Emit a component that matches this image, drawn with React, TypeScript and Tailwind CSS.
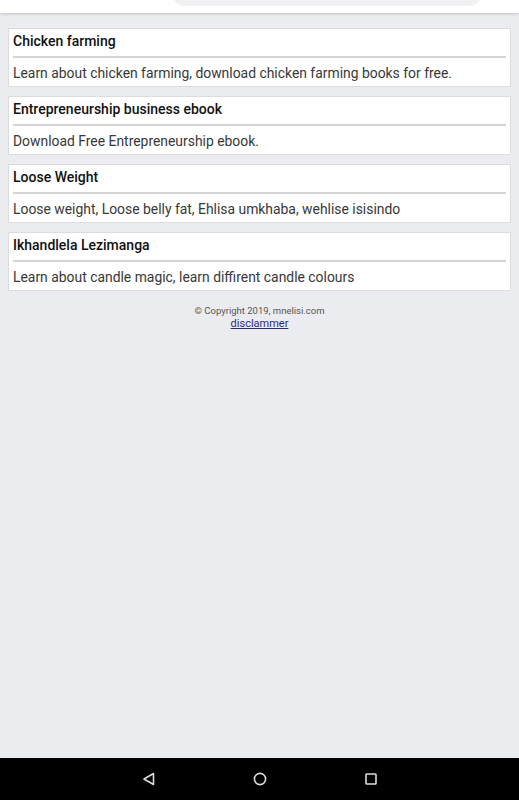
import React from "react";

const items = [
  { t: "Chicken farming", d: "Learn about chicken farming, download chicken farming books for free." },
  { t: "Entrepreneurship business ebook", d: "Download Free Entrepreneurship ebook." },
  { t: "Loose Weight", d: "Loose weight, Loose belly fat, Ehlisa umkhaba, wehlise isisindo" },
  { t: "Ikhandlela Lezimanga", d: "Learn about candle magic, learn diffirent candle colours" },
];

export default function App() {
  return (
    <div className="w-[519px] h-[800px] bg-[#ebecef] flex flex-col overflow-hidden" style={{ fontFamily: "Roboto, 'Liberation Sans', sans-serif" }}>
      <div className="h-[13px] bg-white shadow-[0_1px_3px_rgba(0,0,0,0.18)] relative shrink-0">
        <div className="absolute left-[172px] w-[310px] top-[-20px] h-[26px] rounded-full bg-[#f1f1f3]" />
      </div>
      <div className="flex-1 flex flex-col">
        <div className="flex flex-col gap-[9px] px-[8px] pt-[15px]">
          {items.map((it) => (
            <div key={it.t} className="h-[59px] bg-white border border-[#dcdcdc] px-[4px] pt-[2px]">
              <div className="text-[14px] leading-[20px] font-medium text-[#111]">{it.t}</div>
              <div className="mt-[5px] h-[2px] bg-[#d4d4d4]" />
              <div className="mt-[5px] text-[13.9px] leading-[20px] text-[#383838]">{it.d}</div>
            </div>
          ))}
        </div>
        <div className="flex flex-col items-center mt-[13px]">
          <div className="text-[9.5px] leading-[13px] text-[#555]">© Copyright 2019, mnelisi.com</div>
          <div className="text-[11px] leading-[13px] text-[#2b2b80] underline">disclammer</div>
        </div>
      </div>
      <div className="h-[42px] bg-black shrink-0 flex items-center justify-center gap-[95px]">
        <svg width="16" height="16" viewBox="0 0 16 16">
          <path d="M12.5 2.5 L3 8 L12.5 13.5 Z" fill="none" stroke="#ddd" strokeWidth="1.6" strokeLinejoin="round" />
        </svg>
        <svg width="16" height="16" viewBox="0 0 16 16">
          <circle cx="8" cy="8" r="5.6" fill="none" stroke="#ddd" strokeWidth="1.6" />
        </svg>
        <svg width="16" height="16" viewBox="0 0 16 16">
          <rect x="3" y="3" width="10" height="10" rx="0.8" fill="none" stroke="#ddd" strokeWidth="1.6" />
        </svg>
      </div>
    </div>
  );
}
